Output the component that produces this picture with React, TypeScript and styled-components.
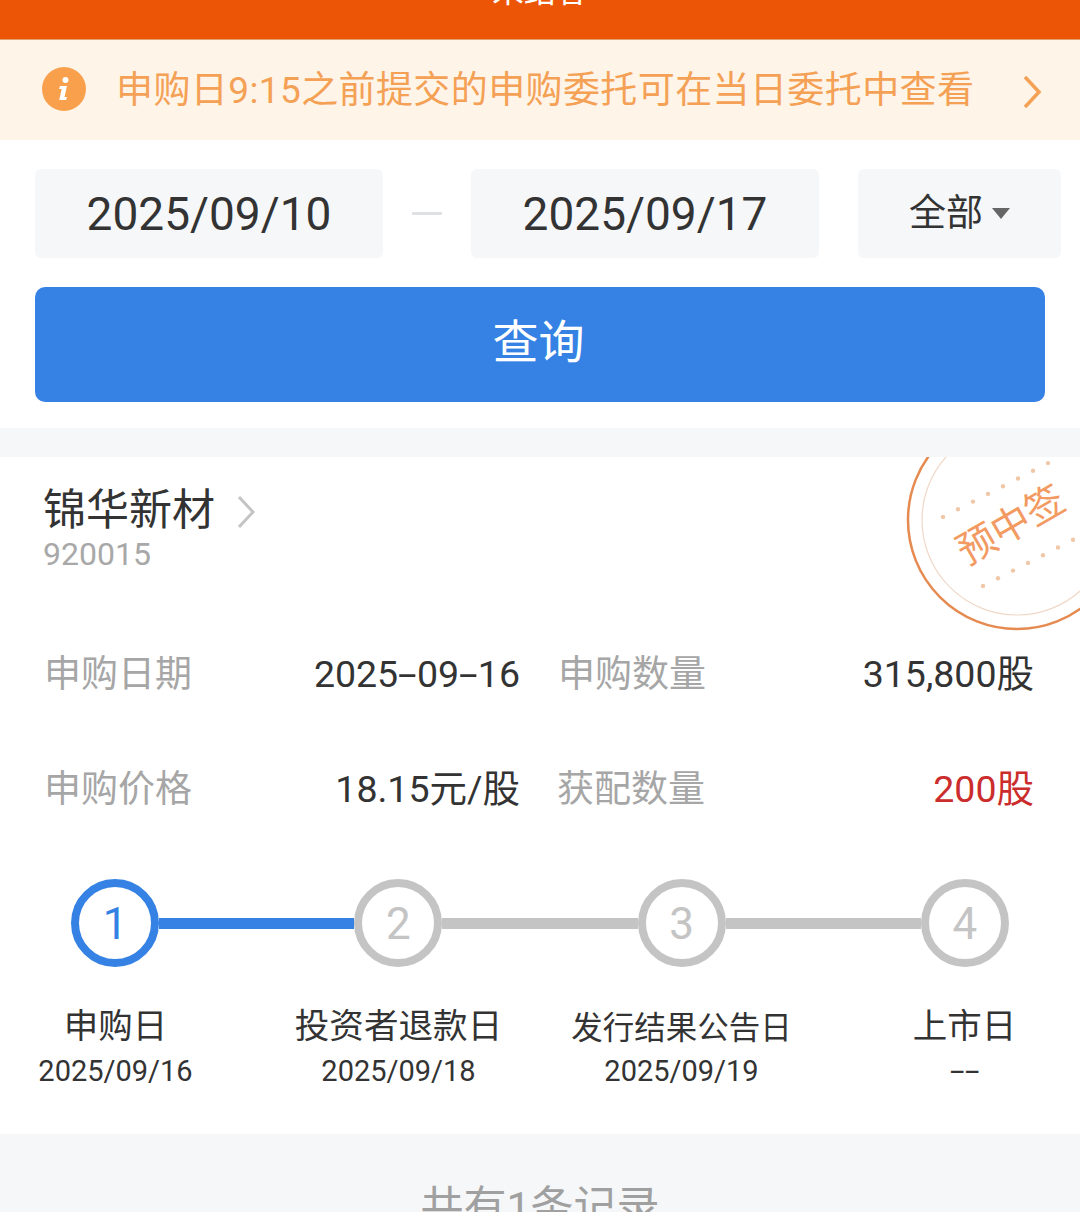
import React from 'react';
import styled, { createGlobalStyle } from 'styled-components';

const Global = createGlobalStyle`
  html, body { margin: 0; padding: 0; background: #fff; }
  body { font-family: "Roboto", "Noto Sans CJK SC", sans-serif; }
`;
const Page = styled.div`
  width: 1080px; height: 1212px; overflow: hidden; background: #fff; display: flex; flex-direction: column;
`;
const TopBar = styled.div`
  height: 39px; flex: none; background: #eb5505; border-bottom: 1px solid #e0a070; color: #fff;
  font-size: 32px; line-height: 32px; text-align: center; overflow: hidden;
  span { display: block; margin-top: -25px; }
`;
const Notice = styled.div`
  height: 100px; flex: none; background: #fff4e8; display: flex; align-items: center; padding: 0 38px 0 42px; color: #f4a155; font-size: 37px;
`;
const NoticeIcon = styled.svg` flex: none; margin-top: -2px; `;
const NoticeText = styled.div` margin-left: 30px; flex: 1; white-space: nowrap; letter-spacing: 0.4px; line-height: 44px; padding-top: 1px; `;
const NoticeArrow = styled.div` display: flex; padding-top: 3px; `;
const Filters = styled.div`
  display: flex; align-items: center; padding: 29px 19px 0 35px; height: 89px; flex: none;
`;
const DateBox = styled.div`
  width: 348px; height: 89px; background: #f6f7f9; border-radius: 6px; display: flex; align-items: center; justify-content: center; color: #333; font-size: 46px;
`;
const Dash = styled.div` width: 30px; height: 3px; background: #dfe1e5; margin: 0 29px; `;
const Select = styled.div`
  margin-left: 39px; width: 203px; height: 89px; background: #f6f7f9; border-radius: 6px; display: flex; align-items: center; justify-content: center; color: #333; font-size: 37px; gap: 9px;
  span { padding-bottom: 0; line-height: 44px; }
`;
const Caret = styled.i` width: 0; height: 0; border: 9px solid transparent; border-top: 11px solid #666; border-bottom: 0; `;
const QueryButton = styled.div`
  margin: 29px 35px 0; height: 115px; background: #3582e4; border-radius: 10px; color: #fff; font-size: 46px; display: flex; align-items: center; justify-content: center; flex: none;
  span { padding-bottom: 6px; margin-left: -3px; line-height: 54px; }
`;
const Gap = styled.div` height: 29px; margin-top: 26px; background: #f6f7f9; flex: none; `;
const Card = styled.div` position: relative; overflow: hidden; flex: none; height: 677px; padding: 24px 0 0; box-sizing: border-box; `;
const Stamp = styled.svg` position: absolute; right: 0; top: 0; `;
const NameRow = styled.div` display: flex; align-items: center; padding-left: 43px; height: 56px; color: #333; font-size: 43px; gap: 21px; `;
const NameText = styled.span` line-height: 50px; padding-top: 2px; `;
const NameArrow = styled.span` display: flex; padding-top: 6px; `;
const Code = styled.div` padding-left: 43px; margin-top: -3px; color: #a8a8a8; font-size: 32px; line-height: 40px; `;
const Grid = styled.div`
  display: grid; grid-template-columns: 476px 514px; margin-top: 80px; padding-left: 44px; row-gap: 74px;
`;
const Cell = styled.div<{ $pad?: number }>` display: flex; align-items: center; justify-content: space-between; height: 41px; font-size: 37.5px; line-height: 41px; color: #333; padding-left: ${p => p.$pad || 0}px; `;
const Label = styled.span` color: #a6a6a6; font-size: 37px; `;
const Value = styled.span<{ $red?: boolean }>` color: ${p => (p.$red ? '#cb2d2d' : '#333')}; `;
const Sep = styled.span`
  display: inline-block; width: 0.5em; text-align: center; transform: scaleX(1.8);
`;
const Stepper = styled.div` display: flex; align-items: center; margin: 69px 0 0 71px; width: 938px; `;
const Circle = styled.div<{ $on?: boolean }>`
  width: 88px; height: 88px; border-radius: 50%; box-sizing: border-box; flex: none; padding-top: 1px;
  border: 8px solid ${p => (p.$on ? '#3582e4' : '#c4c4c4')}; color: ${p => (p.$on ? '#3582e4' : '#c4c4c4')};
  font-size: 44px; display: flex; align-items: center; justify-content: center;
`;
const Line = styled.div<{ $on?: boolean }>` flex: 1; height: 11px; background: ${p => (p.$on ? '#3582e4' : '#c4c4c4')}; `;
const Steps = styled.div` display: grid; grid-template-columns: repeat(4, 283px); margin: 35px 0 0 -26px; `;
const Step = styled.div` display: flex; flex-direction: column; align-items: center; `;
const StepName = styled.div<{ $size?: number; $down?: number }>` font-size: ${p => p.$size || 34.5}px; color: #333; line-height: 48px; white-space: nowrap; padding-top: ${p => p.$down || 0}px; margin-bottom: ${p => -(p.$down || 0)}px; `;
const StepDate = styled.div` font-size: 29px; color: #333; line-height: 43px; `;
const Footer = styled.div` flex: 1; background: #f6f7f9; text-align: center; color: #a0a0a0; font-size: 43px; line-height: 60px; padding-top: 43px; white-space: nowrap; `;

const Chevron = ({ w, h, color, sw }: { w: number; h: number; color: string; sw: number }) => (
  <svg width={w} height={h} viewBox="0 0 20 34" fill="none"><path d="M3 2 L17 17 L3 32" stroke={color} strokeWidth={sw} /></svg>
);

const dots = (x0: number, y0: number, n: number) =>
  Array.from({ length: n }, (_, i) => <circle key={`${x0}-${i}`} cx={x0 + i * 15} cy={y0 - i * 7.7} r={2.2} fill="#f0c8a8" />);

export default function App() {
  return (
    <Page>
      <Global />
      <TopBar><span>未结客</span></TopBar>
      <Notice>
        <NoticeIcon width="44" height="44" viewBox="0 0 44 44"><circle cx="22" cy="22" r="22" fill="#f9a04c" /><circle cx="23.5" cy="13" r="3" fill="#fff" /><path d="M18 19h7l-2.5 11h2.5l-.8 3h-7l2.5-11H17z" fill="#fff" /></NoticeIcon>
        <NoticeText>申购日9:15之前提交的申购委托可在当日委托中查看</NoticeText>
        <NoticeArrow><Chevron w={20} h={34} color="#f4a155" sw={3.5} /></NoticeArrow>
      </Notice>
      <Filters>
        <DateBox>2025/09/10</DateBox>
        <Dash />
        <DateBox>2025/09/17</DateBox>
        <Select><span>全部</span><Caret /></Select>
      </Filters>
      <QueryButton><span>查询</span></QueryButton>
      <Gap />
      <Card>
        <Stamp width="180" height="180" viewBox="0 0 180 180">
          <circle cx="117" cy="63" r="109" fill="none" stroke="#e58a50" strokeWidth="2.5" />
          <circle cx="117" cy="63" r="95" fill="none" stroke="#f0d8c8" strokeWidth="1.2" />
          {dots(43, 60, 8)}
          {dots(83, 129, 7)}
          <text x="67" y="109" transform="rotate(-30 67 109)" fontSize="39" fill="#f29a62" fontFamily="'Noto Sans CJK SC'">预中签</text>
        </Stamp>
        <NameRow><NameText>锦华新材</NameText><NameArrow><Chevron w={20} h={34} color="#c4c4c4" sw={3} /></NameArrow></NameRow>
        <Code>920015</Code>
        <Grid>
          <Cell><Label>申购日期</Label><Value>2025<Sep>-</Sep>09<Sep>-</Sep>16</Value></Cell>
          <Cell $pad={38}><Label>申购数量</Label><Value>315,800股</Value></Cell>
          <Cell><Label>申购价格</Label><Value>18.15元/股</Value></Cell>
          <Cell $pad={37}><Label>获配数量</Label><Value $red>200股</Value></Cell>
        </Grid>
        <Stepper>
          <Circle $on>1</Circle><Line $on />
          <Circle>2</Circle><Line />
          <Circle>3</Circle><Line />
          <Circle>4</Circle>
        </Stepper>
        <Steps>
          <Step><StepName>申购日</StepName><StepDate>2025/09/16</StepDate></Step>
          <Step><StepName $size={34.6}>投资者退款日</StepName><StepDate>2025/09/18</StepDate></Step>
          <Step><StepName $size={31.5} $down={3}>发行结果公告日</StepName><StepDate>2025/09/19</StepDate></Step>
          <Step><StepName>上市日</StepName><StepDate><Sep>-</Sep><Sep>-</Sep></StepDate></Step>
        </Steps>
      </Card>
      <Footer>共有1条记录</Footer>
    </Page>
  );
}
